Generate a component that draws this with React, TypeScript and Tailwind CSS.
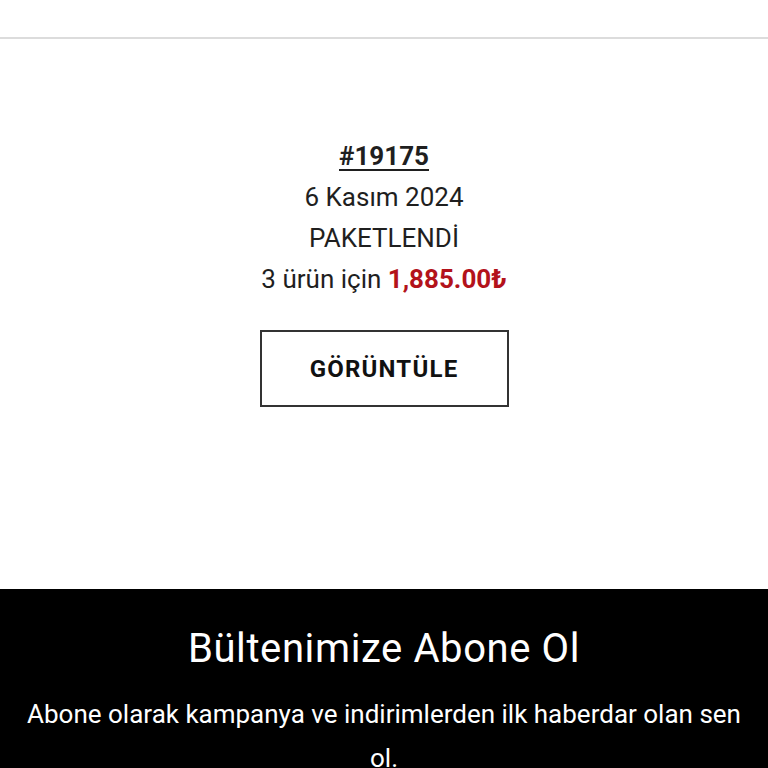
export default function App() {
  return (
    <div className="min-h-[768px] bg-white font-['Roboto',sans-serif] text-[#1f1f1f]">
      <div className="h-[39px] border-b-2 border-[#dcdcdc]" />
      <section className="flex flex-col items-center pt-[97px] pb-[182px]">
        <div className="flex flex-col items-center text-[26px] leading-[41px]">
          <a className="font-bold underline underline-offset-[4px] decoration-[2px]">#19175</a>
          <span>6 Kasım 2024</span>
          <span>PAKETLENDİ</span>
          <span>
            3 ürün için <span className="font-bold text-[#b3121b]">1,885.00₺</span>
          </span>
        </div>
        <button className="mt-[30px] flex h-[77px] w-[249px] items-center justify-center border-2 border-[#333] text-[24px] font-bold tracking-[1.2px] text-[#111]">
          GÖRÜNTÜLE
        </button>
      </section>
      <footer className="bg-black px-6 pt-[36px] pb-10 text-center text-white">
        <h2 className="text-[40px] leading-[48px] tracking-[0.6px]">Bültenimize Abone Ol</h2>
        <p className="mt-[19px] text-[26px] leading-[44px]">
          Abone olarak kampanya ve indirimlerden ilk haberdar olan sen ol.
        </p>
      </footer>
    </div>
  );
}
